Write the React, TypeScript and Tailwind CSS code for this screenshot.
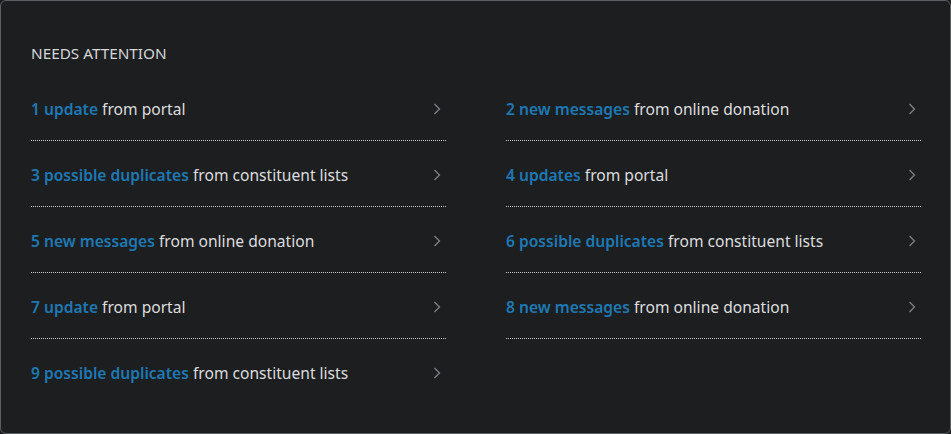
import React from "react";

const items: [string, string][] = [
  ["1 update", "from portal"],
  ["2 new messages", "from online donation"],
  ["3 possible duplicates", "from constituent lists"],
  ["4 updates", "from portal"],
  ["5 new messages", "from online donation"],
  ["6 possible duplicates", "from constituent lists"],
  ["7 update", "from portal"],
  ["8 new messages", "from online donation"],
  ["9 possible duplicates", "from constituent lists"],
];

function Chevron() {
  return (
    <svg width="8" height="12" viewBox="0 0 8 12" fill="none" className="shrink-0">
      <path d="M1.5 1 L6.5 6 L1.5 11" stroke="#7d838a" strokeWidth="1.3" />
    </svg>
  );
}

export default function App() {
  return (
    <div className="w-[951px] h-[434px] bg-[#1d1e20]" style={{ fontFamily: '"Noto Sans", "Open Sans", sans-serif' }}>
      <div className="w-full h-full rounded-[6px] border border-[#5b5e62] bg-[#1d1e20] pl-[30px] pr-[30px] pt-[42px]">
        <h2 className="text-[15.3px] leading-[20px] text-[#d4d6d8] uppercase">Needs attention</h2>
        <div className="grid grid-cols-2 gap-x-[60px] mt-[35px] w-[890px]">
          {items.map(([a, b], i) => (
            <div key={i} className="flex flex-col">
              <div className="flex items-center justify-between h-[22px] pr-[5px]">
                <span className="text-[15.6px] leading-[22px] whitespace-nowrap">
                  <span className="font-semibold text-[#1d79b4]">{a}</span>{" "}
                  <span className="text-[#dcdddf]">{b}</span>
                </span>
                <Chevron />
              </div>
              {i < 8 && <div className="mt-[20px] mb-[23px] border-b border-dotted border-[#c9cbcd]" />}
            </div>
          ))}
        </div>
      </div>
    </div>
  );
}
